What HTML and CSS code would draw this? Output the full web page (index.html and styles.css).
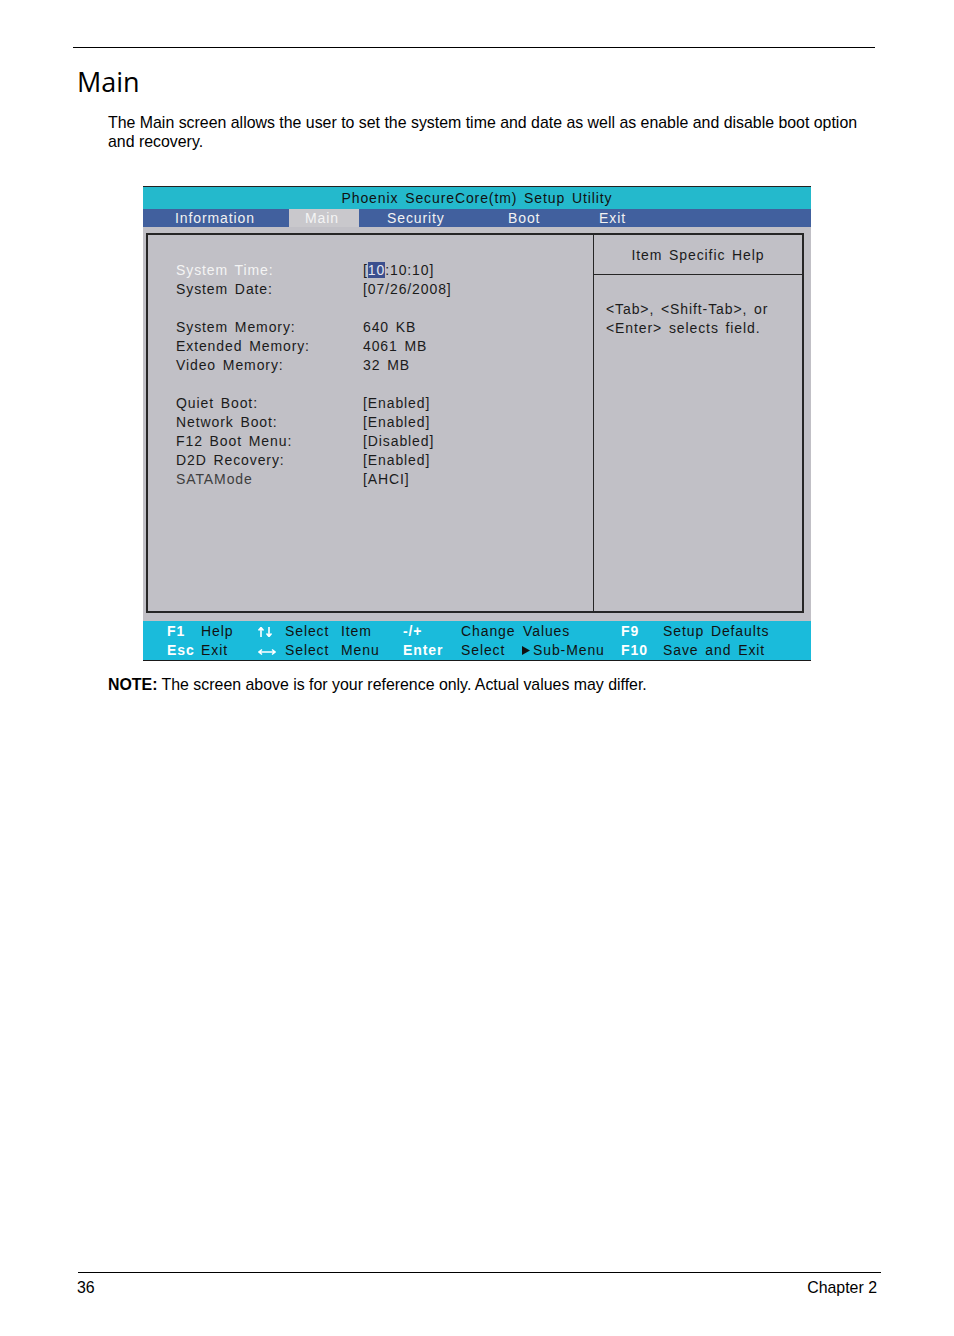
FILE: index.html
```html
<!DOCTYPE html>
<html lang="en">
<head>
    <meta charset="UTF-8">
    <title>Main</title>
    <link rel="stylesheet" href="styles.css">
</head>
<body>
<div class="page">
    <div class="top-rule"></div>
    <h1>Main</h1>
    <p class="intro">The Main screen allows the user to set the system time and date as well as enable and disable boot option and recovery.</p>

    <div class="bios">
        <div class="bios-title">Phoenix SecureCore(tm) Setup Utility</div>
        <div class="bios-menu">
            <span></span>
            <span class="tab">Information</span>
            <span class="tab"><span class="tab-active">Main</span></span>
            <span class="tab">Security</span>
            <span class="tab">Boot</span>
            <span class="tab">Exit</span>
        </div>
        <div class="bios-body">
            <div class="bios-box">
                <div class="items">
                    <span class="label selected">System Time:</span><span>[<span class="cursor">10</span>:10:10]</span>
                    <span class="label">System Date:</span><span>[07/26/2008]</span>
                    <span class="gap"></span><span class="gap"></span>
                    <span class="label">System Memory:</span><span>640 KB</span>
                    <span class="label">Extended Memory:</span><span>4061 MB</span>
                    <span class="label">Video Memory:</span><span>32 MB</span>
                    <span class="gap"></span><span class="gap"></span>
                    <span class="label">Quiet Boot:</span><span>[Enabled]</span>
                    <span class="label">Network Boot:</span><span>[Enabled]</span>
                    <span class="label">F12 Boot Menu:</span><span>[Disabled]</span>
                    <span class="label">D2D Recovery:</span><span>[Enabled]</span>
                    <span class="label dim">SATAMode</span><span>[AHCI]</span>
                </div>
                <div class="help">
                    <div class="help-title">Item Specific Help</div>
                    <div class="help-text">&lt;Tab&gt;, &lt;Shift-Tab&gt;, or<br>&lt;Enter&gt; selects field.</div>
                </div>
            </div>
        </div>
        <div class="bios-keys">
            <span class="key">F1</span><span>Help</span>
            <span class="key"><svg width="15" height="10" viewBox="0 0 15 10"><path d="M3 1v9M0.5 3.5L3 0.5 5.5 3.5M11 0v9M8.5 6.5L11 9.5 13.5 6.5" fill="none" stroke="#fff" stroke-width="1.6"/></svg></span>
            <span>Select</span><span>Item</span>
            <span class="key">-/+</span>
            <span>Change</span><span>Values</span>
            <span class="key">F9</span><span>Setup Defaults</span>

            <span class="key">Esc</span><span>Exit</span>
            <span class="key"><svg width="18" height="8" viewBox="0 0 18 8"><path d="M1 4h16M4 1.5L1 4l3 2.5M14 1.5L17 4l-3 2.5" fill="none" stroke="#fff" stroke-width="1.5"/></svg></span>
            <span>Select</span><span>Menu</span>
            <span class="key">Enter</span>
            <span>Select</span><span class="submenu"><svg width="8" height="9" viewBox="0 0 8 9"><path d="M0 0L8 4.5 0 9z" fill="#111"/></svg>Sub-Menu</span>
            <span class="key">F10</span><span>Save and Exit</span>
        </div>
    </div>

    <p class="note"><b>NOTE:</b> The screen above is for your reference only. Actual values may differ.</p>

    <div class="page-footer">
        <span>36</span>
        <span>Chapter 2</span>
    </div>
</div>
</body>
</html>
```

FILE: styles.css
```css
body {
    margin: 0;
    font-family: "Liberation Sans", Arial, sans-serif;
    color: #000;
}
.page {
    min-height: 1336px;
    display: flex;
    flex-direction: column;
}
.top-rule {
    margin: 47px 0 0 73px;
    width: 802px;
    border-top: 1px solid #000;
}
h1 {
    margin: 18px 0 0 77px;
    font-family: "Open Sans", "Noto Sans", sans-serif;
    font-weight: 400;
    font-size: 27px;
    line-height: 32px;
}
.intro {
    margin: 15px 0 0 108px;
    width: 755px;
    font-size: 15.9px;
    line-height: 19px;
}

/* bios screen */
.bios {
    margin: 35px 0 0 143px;
    width: 668px;
    font-family: "Liberation Sans", Arial, sans-serif;
    font-size: 14px;
    letter-spacing: 0.9px;
    word-spacing: 2px;
    color: #1b1b1b;
}
.bios-title {
    height: 22px;
    line-height: 23px;
    border-top: 1px solid #222;
    background-color: #24b9cc;
    text-align: center;
    color: #111;
}
.bios-menu {
    display: grid;
    grid-template-columns: 32px 114px 98px 121px 91px auto;
    height: 18px;
    line-height: 18px;
    background-color: #41609e;
    color: #f2f2f2;
}
.tab-active {
    display: inline-block;
    padding: 0 20px 0 16px;
    background-color: #c9c8cc;
    color: #f4f4f4;
}
.bios-body {
    background-color: #c1c0c6;
    padding: 6px 7px 8px 3px;
}
.bios-box {
    display: flex;
    height: 376px;
    border: 2px solid #262626;
}
.items {
    width: 417px;
    padding: 26px 0 0 28px;
    display: grid;
    grid-template-columns: 187px auto;
    grid-auto-rows: 19px;
    align-content: start;
    line-height: 19px;
}
.label.selected {
    color: #f4f4f4;
}
.label.dim {
    color: #3e3e3e;
}
.cursor {
    display: inline-block;
    line-height: 16px;
    background-color: #3c4f8e;
    color: #e8e8f0;
}
.help {
    flex: 1;
    border-left: 1px solid #262626;
}
.help-title {
    height: 39px;
    line-height: 40px;
    border-bottom: 1px solid #262626;
    text-align: center;
}
.help-text {
    padding: 25px 0 0 12px;
    line-height: 19px;
}
.bios-keys {
    display: grid;
    grid-template-columns: 34px 57px 27px 56px 62px 58px 62px 98px 42px auto;
    grid-auto-rows: 19px;
    line-height: 19px;
    padding: 1px 0 0 24px;
    height: 38px;
    background-color: #1abbdb;
    border-bottom: 1px solid #1a1a1a;
    color: #111;
}
.key {
    color: #fff;
    font-weight: bold;
}
.key svg {
    vertical-align: -1px;
}
.submenu svg {
    margin: 0 3px 0 -1px;
    vertical-align: 0;
}

.note {
    margin: 14px 0 0 108px;
    font-size: 15.9px;
    line-height: 19px;
}

.page-footer {
    margin: auto 0 0 78px;
    width: 799px;
    padding: 5px 4px 39px 0;
    border-top: 1px solid #000;
    display: flex;
    justify-content: space-between;
    font-size: 15.9px;
    line-height: 19px;
}
.page-footer span:first-child {
    margin-left: -1px;
}
```
